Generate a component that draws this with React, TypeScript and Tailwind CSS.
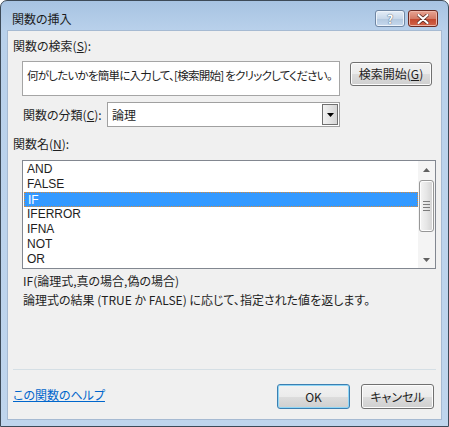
import React from "react";

const FONT = "font-['Noto_Sans_CJK_JP','Noto_Sans',sans-serif] [font-feature-settings:'palt']";

const functions = ["AND", "FALSE", "IF", "IFERROR", "IFNA", "NOT", "OR"];

// Win7 style push button
function Button({
  children,
  isDefault = false,
  className = "",
}: {
  children: React.ReactNode;
  isDefault?: boolean;
  className?: string;
}) {
  return (
    <div
      className={`flex items-center justify-center rounded-[3px] border ${
        isDefault ? "border-[#3c7fb1] shadow-[inset_0_0_0_1px_#8fd6f6]" : "border-[#707070] shadow-[inset_0_0_0_1px_#fcfcfc]"
      } bg-[linear-gradient(#f2f2f2_0%,#ebebeb_50%,#dddddd_51%,#cfcfcf_100%)] text-[12px] leading-[16px] text-[#1e1e1e] ${className}`}
    >
      {children}
    </div>
  );
}

function ScrollArrow({ up }: { up?: boolean }) {
  return (
    <div className="flex h-[17px] items-center justify-center">
      <svg width="7" height="4" viewBox="0 0 7 4">
        {up ? <path d="M3.5 0 L7 4 L0 4 Z" fill="#606060" /> : <path d="M0 0 L7 0 L3.5 4 Z" fill="#606060" />}
      </svg>
    </div>
  );
}

export default function App() {
  return (
    <div className={`${FONT} h-[427px] w-[449px] bg-white`}>
      <div className="flex h-[427px] w-[449px] flex-col rounded-t-[7px] border border-[#3d4a58] bg-[linear-gradient(#a7c3e2_0px,#b9d1eb_30px,#bfd5ed_100%)]">
        {/* Title bar */}
        <div className="flex h-[29px] shrink-0 items-start">
          <div className="pl-[11px] pt-[11px] text-[12px] leading-[14px] text-[#1b1b1b]">関数の挿入</div>
          <div className="ml-auto mr-[10px] mt-[9px] flex gap-[3px]">
            <div className="flex h-[17px] w-[30px] items-center justify-center rounded-[3px] border border-[#6f86a3] bg-[linear-gradient(#e4edf7_0%,#c8d8ea_50%,#b3c8df_51%,#c6d9ee_100%)] shadow-[inset_0_0_0_1px_#eef4fb]">
              <span className="text-[12px] font-bold leading-[12px] text-white [text-shadow:0_0_1px_#4a5d78,0_0_1px_#4a5d78]">?</span>
            </div>
            <div className="flex h-[17px] w-[30px] items-center justify-center rounded-[3px] border border-[#6b2a22] bg-[linear-gradient(#e8a493_0%,#d47a66_50%,#c2452c_51%,#d2654a_100%)] shadow-[inset_0_0_0_1px_#edb5a7]">
              <svg width="12" height="10" viewBox="0 0 12 10">
                <path d="M1.5 1 L10.5 9 M10.5 1 L1.5 9" stroke="#5a2a22" strokeWidth="3.6" strokeLinecap="round" />
                <path d="M1.5 1 L10.5 9 M10.5 1 L1.5 9" stroke="#ffffff" strokeWidth="2.2" strokeLinecap="round" />
              </svg>
            </div>
          </div>
        </div>

        {/* Client area */}
        <div className="mx-[6px] mb-[6px] flex flex-1 flex-col border border-[#a6bad2] bg-[#f0f0f0] text-[12px] leading-[16px] text-[#1e1e1e]">
          <div className="ml-[5px] mt-[7px] h-[16px]">
            関数の検索(<span className="underline">S</span>):
          </div>

          <div className="mt-[7px] flex items-start">
            <div className="ml-[14px] h-[35px] w-[318px] overflow-hidden whitespace-nowrap border border-[#a5a5a5] bg-white pl-[4px] pt-[5px] text-[11.5px] leading-[16px] tracking-[-0.75px]">
              何がしたいかを簡単に入力して、[検索開始] をクリックしてください。
            </div>
            <Button className="ml-[10px] mt-[1px] h-[24px] w-[82px]">
              検索開始(<span className="underline">G</span>)
            </Button>
          </div>

          <div className="mt-[6px] flex items-center">
            <div className="ml-[15px] w-[84px]">
              関数の分類(<span className="underline">C</span>):
            </div>
            <div className="flex h-[25px] w-[233px] items-center border border-[#a0a0a0] bg-white">
              <div className="flex-1 pl-[4px]">論理</div>
              <div className="mr-[1px] flex h-[21px] w-[16px] items-center justify-center border border-[#707070] bg-[linear-gradient(90deg,#f2f2f2,#d6d6d6)]">
                <svg width="7" height="4" viewBox="0 0 7 4">
                  <path d="M0 0 L7 0 L3.5 4 Z" fill="#000000" />
                </svg>
              </div>
            </div>
          </div>

          <div className="ml-[5px] mt-[9px] h-[16px]">
            関数名(<span className="underline">N</span>):
          </div>

          {/* Function list */}
          <div className="ml-[14px] mt-[8px] flex h-[109px] w-[414px] border border-[#828790] bg-white">
            <div className="flex-1 pl-[1px] pt-[1px] font-['Liberation_Sans',Arial,sans-serif]">
              {functions.map((f) => (
                <div
                  key={f}
                  className={`h-[15px] pl-[3px] text-[12px] leading-[15px] ${
                    f === "IF" ? "border border-dotted border-[#d98b3a] bg-[#3399ff] pl-[2px] leading-[13px] text-white" : "text-[#1e1e1e]"
                  }`}
                >
                  {f}
                </div>
              ))}
            </div>
            <div className="flex w-[17px] flex-col bg-[#f4f4f4]">
              <ScrollArrow up />
              <div className="mx-[1px] mt-[2px] flex h-[52px] items-center justify-center rounded-[3px] border border-[#979797] bg-[linear-gradient(90deg,#f4f4f4,#e6e6e6_50%,#d2d2d2)] shadow-[inset_0_0_0_1px_#fdfdfd]">
                <div className="flex flex-col gap-[2px]">
                  <div className="h-[1px] w-[7px] bg-[#7b7b7b]" />
                  <div className="h-[1px] w-[7px] bg-[#7b7b7b]" />
                  <div className="h-[1px] w-[7px] bg-[#7b7b7b]" />
                  <div className="h-[1px] w-[7px] bg-[#7b7b7b]" />
                </div>
              </div>
              <div className="flex-1" />
              <ScrollArrow />
            </div>
          </div>

          {/* Description */}
          <div className="ml-[15px] mt-[2px] leading-[19px]">
            <div>IF(論理式,真の場合,偽の場合)</div>
            <div>論理式の結果 (TRUE か FALSE) に応じて、指定された値を返します。</div>
          </div>

          <div className="mx-[5px] mt-[60px] h-[1px] bg-[#d5dfe5]" />

          <div className="mt-[14px] flex items-start">
            <div className="ml-[5px] mt-[3px] text-[#0066cc] underline">この関数のヘルプ</div>
            <Button isDefault className="ml-auto h-[25px] w-[73px]">
              OK
            </Button>
            <Button className="ml-[11px] mr-[7px] h-[25px] w-[73px]">キャンセル</Button>
          </div>
        </div>
      </div>
    </div>
  );
}
